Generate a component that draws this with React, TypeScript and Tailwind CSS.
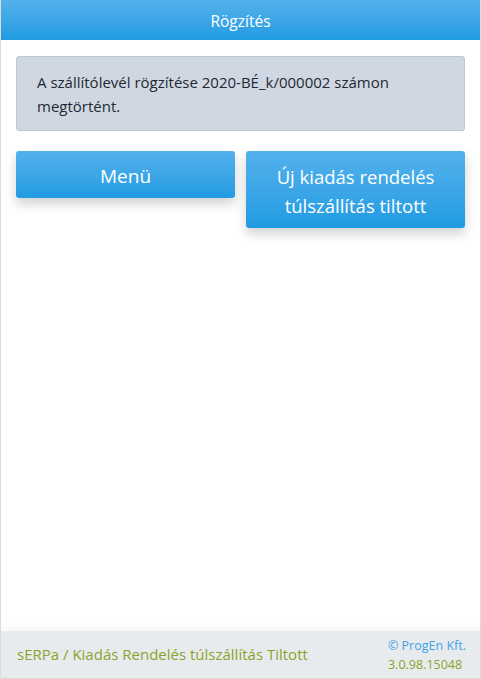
export default function App() {
  return (
    <div
      className="h-[679px] w-[481px] flex flex-col bg-white border-x border-b border-[#dcdcdc]"
      style={{ fontFamily: '"Open Sans", "Noto Sans", sans-serif' }}
    >
      {/* Header */}
      <div className="h-10 shrink-0 flex items-center justify-center pt-[3px] bg-gradient-to-b from-[#52b1eb] to-[#1f9be3] text-white text-[15.5px]">
        Rögzítés
      </div>

      {/* Content */}
      <div className="flex-1 px-[15px] pt-4">
        <div className="rounded-[3px] border border-[#b9c7d6] bg-[#cfd8e2] px-5 pt-[13px] pb-3 text-[15px] leading-6 text-[#1f2933]">
          A szállítólevél rögzítése 2020-BÉ_k/000002 számon megtörtént.
        </div>

        <div className="mt-5 flex items-start gap-[11px]">
          <button className="flex-1 h-[47px] pt-[3px] rounded-[3px] bg-gradient-to-b from-[#52b1eb] to-[#1f9be3] text-white text-[19px] shadow-[0_6px_12px_rgba(0,0,0,0.18)]">
            Menü
          </button>
          <button className="flex-1 h-[77px] pt-[2px] rounded-[3px] bg-gradient-to-b from-[#52b1eb] to-[#1f9be3] text-white text-[18.5px] leading-[29px] shadow-[0_6px_12px_rgba(0,0,0,0.18)]">
            Új kiadás rendelés
            <br />
            túlszállítás tiltott
          </button>
        </div>
      </div>

      {/* Footer */}
      <div className="h-[47px] shrink-0 flex items-center justify-between bg-[#e8ebee] pl-4 pr-[14px] shadow-[0_-4px_8px_rgba(0,0,0,0.04)]">
        <span className="text-[15px] text-[#8aa32b]">sERPa / Kiadás Rendelés túlszállítás Tiltott</span>
        <div className="flex flex-col items-start text-[12.5px] leading-[19px]">
          <span className="text-[#3fa3e8]">© ProgEn Kft.</span>
          <span className="text-[#8aa32b]">3.0.98.15048</span>
        </div>
      </div>
    </div>
  );
}
